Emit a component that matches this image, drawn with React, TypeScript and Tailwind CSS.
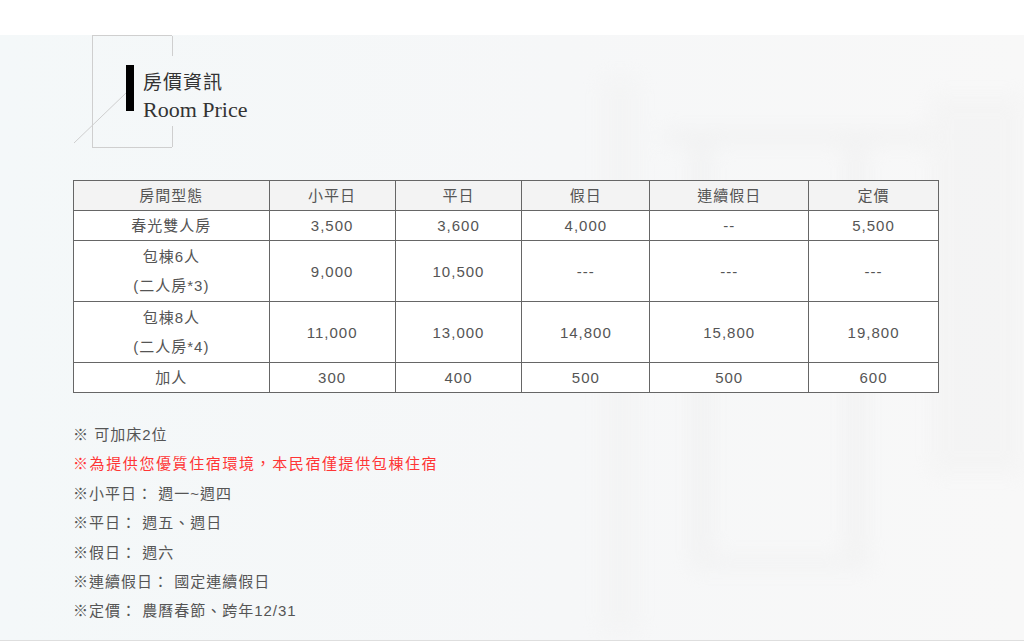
import React from "react"

const font = { fontFamily: '"Liberation Sans", "Noto Sans CJK TC", sans-serif' }

type Row = { name: string[]; prices: string[] }

const head = ["房間型態", "小平日", "平日", "假日", "連續假日", "定價"]

const rows: Row[] = [
  { name: ["春光雙人房"], prices: ["3,500", "3,600", "4,000", "--", "5,500"] },
  { name: ["包棟6人", "(二人房*3)"], prices: ["9,000", "10,500", "---", "---", "---"] },
  { name: ["包棟8人", "(二人房*4)"], prices: ["11,000", "13,000", "14,800", "15,800", "19,800"] },
  { name: ["加人"], prices: ["300", "400", "500", "500", "600"] },
]

const notes = [
  { text: "※ 可加床2位", red: false },
  { text: "※為提供您優質住宿環境，本民宿僅提供包棟住宿", red: true },
  { text: "※小平日： 週一~週四", red: false },
  { text: "※平日： 週五、週日", red: false },
  { text: "※假日： 週六", red: false },
  { text: "※連續假日： 國定連續假日", red: false },
  { text: "※定價： 農曆春節、跨年12/31", red: false },
]

function Backdrop() {
  // blurred photo of the room behind the content
  return (
    <div className="absolute inset-0 pointer-events-none overflow-hidden">
      <svg width="1024" height="606" viewBox="0 0 1024 606">
        <defs>
          <filter id="b" x="-20%" y="-20%" width="140%" height="140%">
            <feGaussianBlur stdDeviation="10" />
          </filter>
          <linearGradient id="g" x1="0" x2="1" y1="0" y2="0">
            <stop offset="0" stopColor="#f4f8f9" />
            <stop offset="0.55" stopColor="#f6f7f8" />
            <stop offset="1" stopColor="#f8f8f8" />
          </linearGradient>
        </defs>
        <rect width="1024" height="606" fill="url(#g)" />
        <g filter="url(#b)" opacity="0.35">
          <rect x="665" y="95" width="270" height="14" fill="#e6e6e6" />
          <rect x="690" y="110" width="22" height="420" fill="#e9e9e9" />
          <rect x="845" y="110" width="22" height="420" fill="#e9e9e9" />
          <rect x="690" y="520" width="180" height="16" fill="#ebebeb" />
          <rect x="930" y="60" width="94" height="380" fill="#eeeeee" />
          <rect x="600" y="40" width="40" height="560" fill="#f0f0f0" />
        </g>
      </svg>
    </div>
  )
}

export default function App() {
  return (
    <div className="w-[1024px] h-[644px] bg-white overflow-hidden text-[#555]" style={font}>
      <div className="h-[35px] bg-white" />
      <section className="relative h-[606px] border-b border-[#dedede] bg-[#f5f7f8]">
        <Backdrop />
        <div className="relative pl-[73px]">
          <div className="relative ml-[19px] w-[80px] h-[113px] border-l border-t border-b border-[#cfcfcf] pt-[29px] pl-[33px]">
            <div className="absolute right-[-1px] top-0 h-[20px] border-r border-[#cfcfcf]" />
            <div className="absolute right-[-1px] bottom-0 h-[21px] border-r border-[#cfcfcf]" />
            <svg className="absolute left-[-20px] top-[56px]" width="54" height="52" viewBox="0 0 54 52">
              <line x1="1" y1="51" x2="53" y2="1" stroke="#cfcfcf" strokeWidth="1" />
            </svg>
            <div className="flex gap-[9px] whitespace-nowrap">
              <div className="w-[8px] h-[46px] bg-black shrink-0" />
              <div className="flex flex-col text-[#333]">
                <span
                  className="text-[19px] leading-[24px] tracking-[1px] mt-[6px]"
                  style={{ fontFamily: '"Liberation Serif", "Noto Sans CJK TC", serif' }}
                >
                  房價資訊
                </span>
                <span
                  className="text-[22px] leading-[26px] mt-[2px]"
                  style={{ fontFamily: '"Liberation Serif", serif' }}
                >
                  Room Price
                </span>
              </div>
            </div>
          </div>

          <table className="mt-[32px] w-[866px] border-collapse text-[15px] tracking-[1px] text-center">
            <colgroup>
              <col className="w-[196px]" />
              <col className="w-[126px]" />
              <col className="w-[127px]" />
              <col className="w-[128px]" />
              <col className="w-[159px]" />
              <col className="w-[130px]" />
            </colgroup>
            <thead>
              <tr className="bg-[#f3f3f3]">
                {head.map((h) => (
                  <th key={h} className="border border-[#666] font-normal leading-[29px] p-0">
                    {h}
                  </th>
                ))}
              </tr>
            </thead>
            <tbody className="bg-white">
              {rows.map((r) => (
                <tr key={r.name.join()}>
                  <td className={`border border-[#666] p-0 leading-[29px] ${r.name.length > 1 ? "py-px" : ""}`}>
                    {r.name.map((n) => (
                      <div key={n}>{n}</div>
                    ))}
                  </td>
                  {r.prices.map((p, i) => (
                    <td key={i} className="border border-[#666] p-0 leading-[29px]">
                      {p}
                    </td>
                  ))}
                </tr>
              ))}
            </tbody>
          </table>

          <ul className="mt-[27px] text-[15px] tracking-[1px] leading-[29.4px]">
            {notes.map((n) => (
              <li key={n.text} className={n.red ? "text-[#ff3535] tracking-[1.6px]" : ""}>
                {n.text}
              </li>
            ))}
          </ul>
        </div>
      </section>
    </div>
  )
}
